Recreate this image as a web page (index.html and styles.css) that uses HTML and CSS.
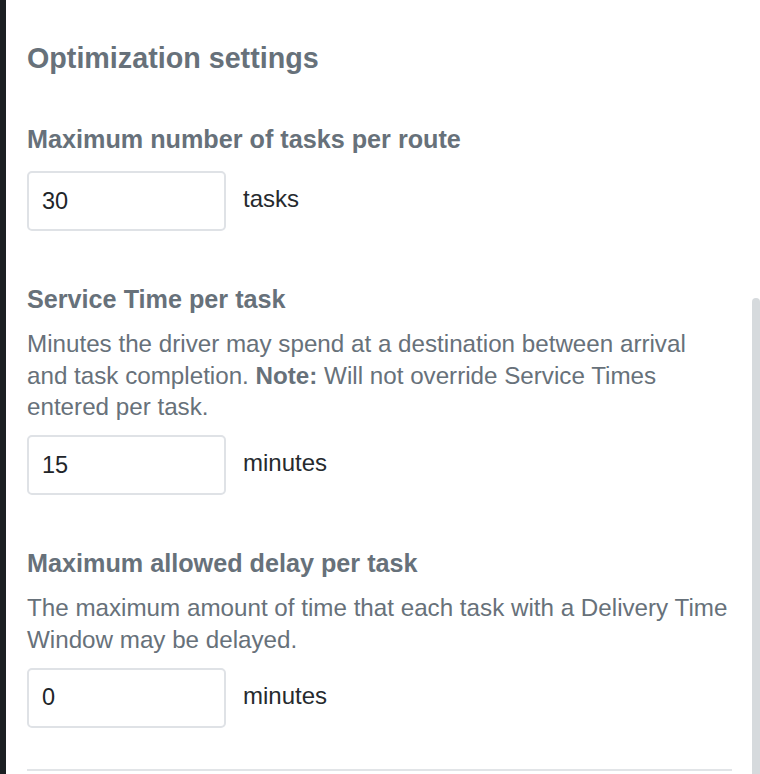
FILE: index.html
```html
<!DOCTYPE html>
<html>
<head>
<meta charset="utf-8">
<link rel="stylesheet" href="styles.css">
</head>
<body>
<div class="page">
  <div class="backdrop"></div>
  <div class="panel">
    <h2 class="title">Optimization settings</h2>

    <section class="field">
      <h3 class="label">Maximum number of tasks per route</h3>
      <div class="row">
        <div class="input">30</div>
        <span class="unit">tasks</span>
      </div>
    </section>

    <section class="field">
      <h3 class="label">Service Time per task</h3>
      <p class="desc">Minutes the driver may spend at a destination between arrival<br>and task completion. <b>Note:</b> Will not override Service Times<br>entered per task.</p>
      <div class="row">
        <div class="input">15</div>
        <span class="unit">minutes</span>
      </div>
    </section>

    <section class="field">
      <h3 class="label">Maximum allowed delay per task</h3>
      <p class="desc desc-short">The maximum amount of time that each task with a Delivery Time<br>Window may be delayed.</p>
      <div class="row">
        <div class="input">0</div>
        <span class="unit">minutes</span>
      </div>
    </section>

    <div class="divider"></div>
    <div class="scrollbar"></div>
  </div>
</div>
</body>
</html>
```

FILE: styles.css
```css
html, body {
  margin: 0;
  padding: 0;
  height: 100%;
  overflow: hidden;
  background: #1b1f22;
}
.page {
  display: flex;
  height: 774px;
}
.backdrop {
  width: 6px;
  flex: none;
  background: #1b1f22;
}
.panel {
  position: relative;
  flex: 1;
  background: #ffffff;
  padding: 41px 28px 0 21px;
  font-family: "Liberation Sans", Arial, sans-serif;
  color: #67717a;
  overflow: hidden;
}
.title {
  margin: 0 0 49px;
  font-size: 28.7px;
  line-height: 34px;
  font-weight: bold;
  color: #67717a;
}
.field {
  margin-bottom: 53px;
}
.label {
  margin: 0 0 17px;
  font-size: 25.2px;
  line-height: 30px;
  font-weight: bold;
  color: #67717a;
}
.desc {
  margin: -3px 0 12.5px;
  font-size: 24.2px;
  line-height: 31.5px;
  color: #67717a;
  white-space: nowrap;
}
.desc-short {
  margin-top: -3px;
  margin-bottom: 12.5px;
}
.desc b {
  font-weight: bold;
}
.row {
  display: flex;
  align-items: flex-start;
  gap: 17px;
}
.input {
  box-sizing: border-box;
  width: 199px;
  height: 60px;
  border: 2px solid #dfe2e6;
  border-radius: 5px;
  padding: 0 13px;
  display: flex;
  align-items: center;
  font-size: 23.5px;
  color: #212529;
}
.unit {
  padding-top: 14px;
  font-size: 24px;
  line-height: 28px;
  color: #262a2e;
}
.divider {
  height: 2px;
  background: #e1e4e7;
  margin-top: -12px;
}
.scrollbar {
  position: absolute;
  right: 0;
  top: 298px;
  width: 8px;
  height: 500px;
  background: #d6dadd;
  border-radius: 5px 5px 0 0;
}
```
